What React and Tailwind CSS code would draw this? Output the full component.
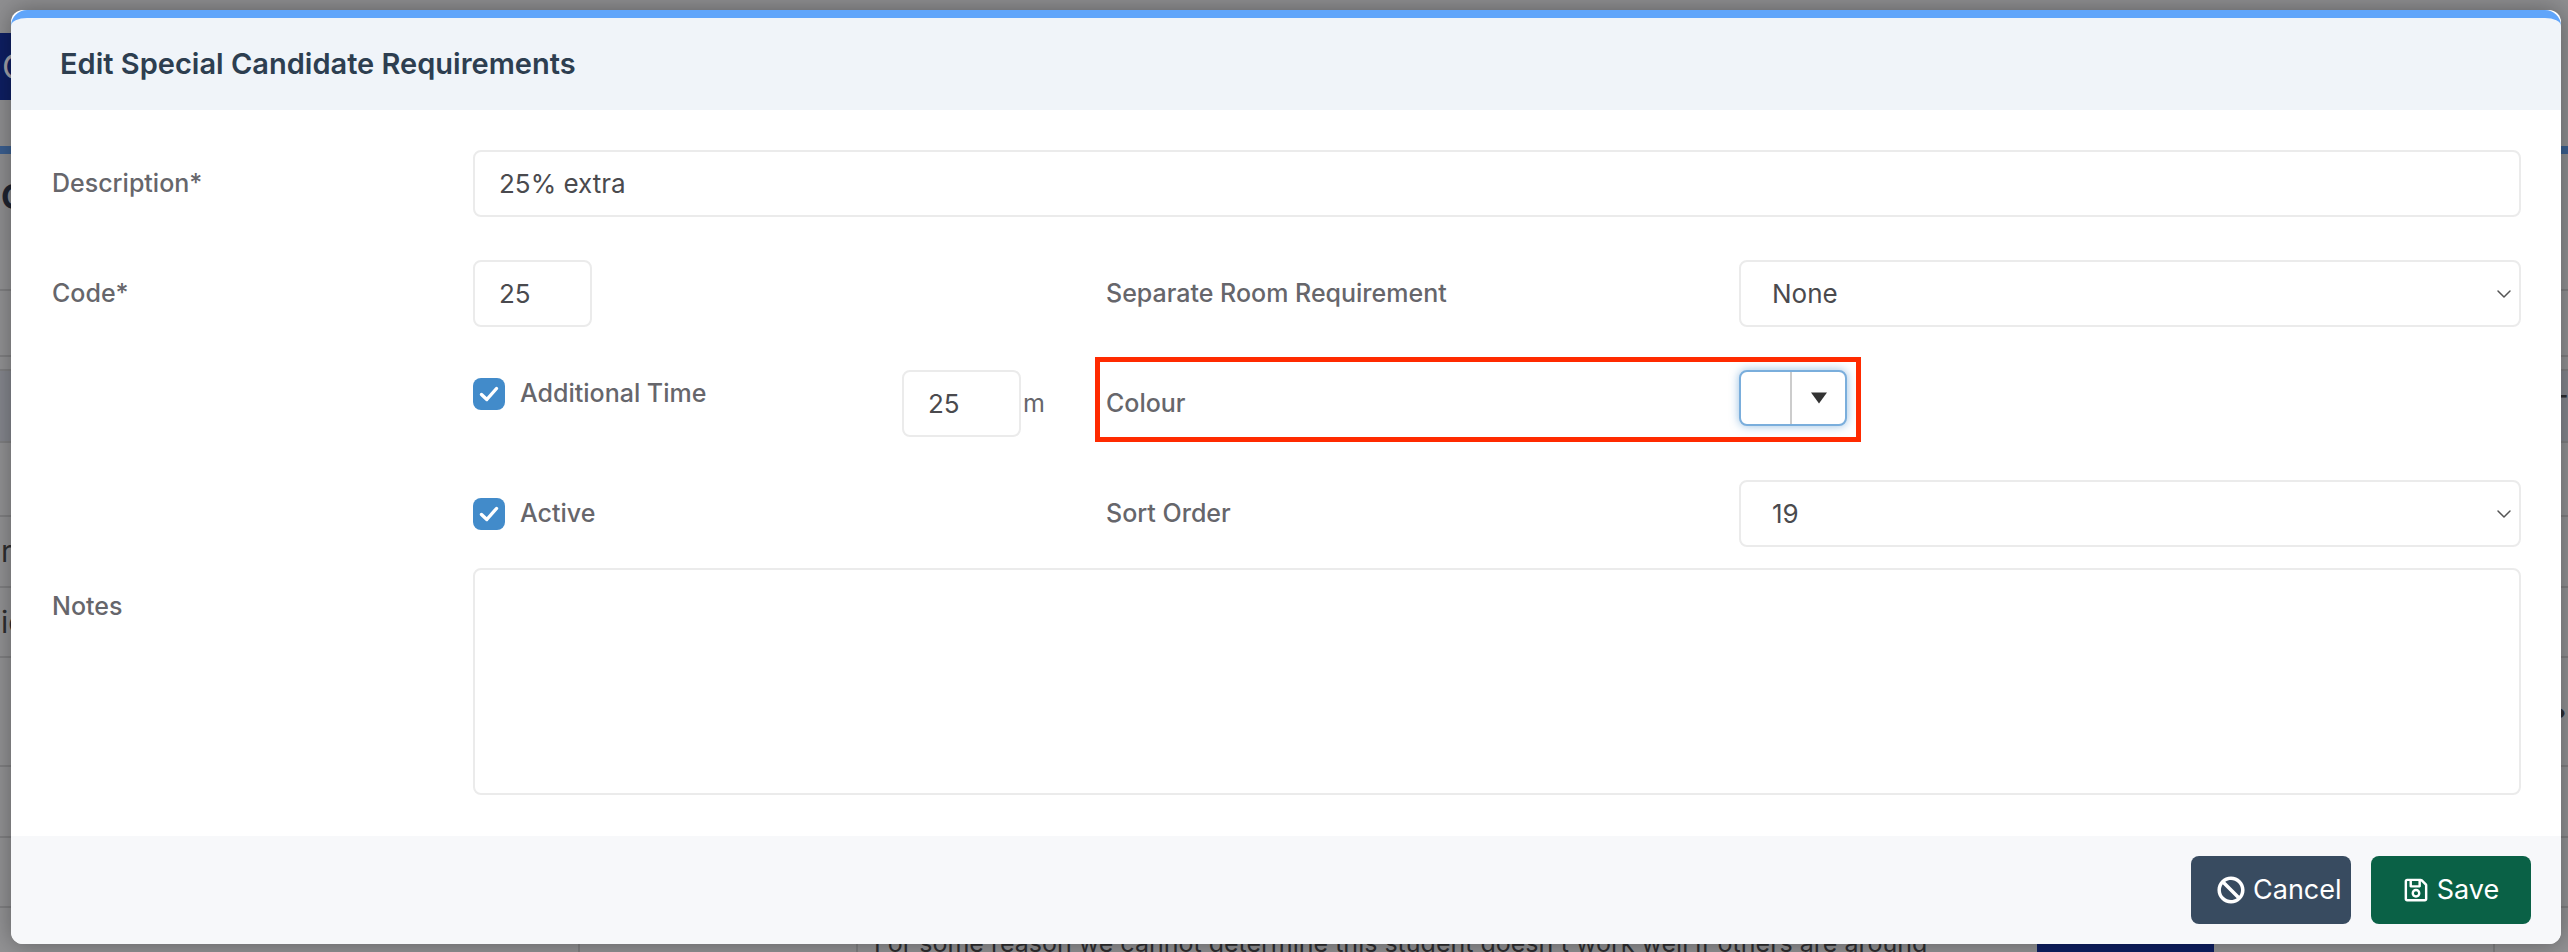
import { ChevronDown } from "lucide-react";
import { FaBan, FaRegSave } from "react-icons/fa";

// what is left of the page behind the dialog, top to bottom
const rows = [
  { h: 41, left: "", right: "" },
  { h: 66 },
  { h: 14 },
  { h: 72, tint: true, right: "T" },
  { h: 74 },
  { h: 71, left: "r" },
  { h: 70, left: "ic" },
  { h: 109, right: "•" },
  { h: 71 },
  { h: 70 },
];

const inputClass =
  "h-[67px] rounded-lg border-2 border-[#ebebeb] bg-white text-[26px] text-[#4a4a4e] outline-none";
const labelClass = "text-[25px] font-medium text-[#66666b]";

const Check = () => (
  <span className="flex h-8 w-8 shrink-0 items-center justify-center rounded-lg bg-[#428bca]">
    <svg width="22" height="22" viewBox="0 0 22 22" fill="none">
      <path d="M3.5 11.5 L8.8 16.5 L18.5 5.5" stroke="white" strokeWidth="3.4" strokeLinecap="round" strokeLinejoin="round" />
    </svg>
  </span>
);

const Select = ({ value }) => (
  <div className="relative w-[782px]">
    <select
      defaultValue={value}
      className={`${inputClass} w-full appearance-none pl-[31px]`}
    >
      <option>{value}</option>
    </select>
    <ChevronDown
      size={24}
      strokeWidth={1.5}
      className="pointer-events-none absolute right-[5px] top-[22px] text-[#555]"
    />
  </div>
);

const Backdrop = () => (
  <div className="flex h-[952px] w-[2568px] flex-col overflow-hidden bg-[#8f8f91]">
    <div className="mt-[33px] flex h-[67px] w-[1500px] items-center bg-[#0e1f63] pl-[2px] text-[34px] text-[#a3a3ab]">
      C
    </div>
    <div className="mt-[46px] h-2 w-full bg-[#3b5f90]" />
    <div className="flex h-[96px] items-center pl-[1px] pb-[12px] text-[34px] font-bold text-[#1f2430]">C</div>
    {rows.map((row, i) => (
      <div
        key={i}
        style={{ height: row.h }}
        className={`flex shrink-0 items-center justify-between overflow-hidden border-b-2 border-[#808082] text-[30px] text-[#2e2e30] ${
          row.tint ? "bg-[#85878e]" : "bg-[#929294]"
        }`}
      >
        <span className="pl-[1px]">{row.left}</span>
        <span className="pr-[-2px]">{row.right}</span>
      </div>
    ))}
    <div className="flex h-[44px] shrink-0 bg-[#929294]">
      <div className="w-[578px]" />
      <div className="w-[278px] border-l-2 border-[#808082]" />
      <div className="w-[1181px] whitespace-nowrap border-l-2 border-[#808082] pl-[16px] pt-5 text-[25px] leading-[30px] text-[#2e2e30]">
        For some reason we cannot determine this student doesn't work well if others are around
      </div>
      <div className="mt-[36px] w-[177px] bg-[#0e1f63]" />
      <div className="ml-[279px] border-l-2 border-[#808082]" />
    </div>
  </div>
);

const App = () => {
  return (
    <div className="relative h-[952px] w-[2568px] overflow-hidden font-['Inter',sans-serif]">
      <Backdrop />

      <div className="absolute left-[11px] top-[10px] flex h-[934px] w-[2550px] flex-col rounded-xl bg-white shadow-[0_0_24px_rgba(0,0,0,0.35)]">
        <div className="flex h-[100px] shrink-0 items-center rounded-t-[16px] border-t-8 border-[#60a5fa] bg-[#f0f4f9] pl-[49px]">
          <h1 className="text-[29px] font-semibold text-[#2d3e50]">Edit Special Candidate Requirements</h1>
        </div>

        <div className="flex flex-1 flex-col gap-[43px] pl-[41px] pr-[40px] pt-[40px]">
          <div className="flex items-center">
            <label className={`${labelClass} w-[421px] shrink-0`}>Description*</label>
            <input defaultValue="25% extra" className={`${inputClass} flex-1 pl-[24px]`} />
          </div>

          <div className="flex items-center">
            <label className={`${labelClass} w-[421px] shrink-0`}>Code*</label>
            <div className="w-[633px] shrink-0">
              <input defaultValue="25" className={`${inputClass} w-[119px] pl-[24px]`} />
            </div>
            <label className={`${labelClass} w-[633px] shrink-0`}>Separate Room Requirement</label>
            <Select value="None" />
          </div>

          <div className="flex h-[67px] items-center">
            <div className="ml-[421px] flex w-[429px] shrink-0 items-center gap-[15px] self-start pt-[5px]">
              <Check />
              <span className={labelClass}>Additional Time</span>
            </div>
            <input defaultValue="25" className={`${inputClass} w-[119px] pl-[24px]`} />
            <span className={`${labelClass} ml-[2px] w-[83px] shrink-0 font-normal`}>m</span>
            <label className={`${labelClass} w-[633px] shrink-0`}>Colour</label>
            <div className="mb-[11px] flex h-14 w-[108px] items-stretch rounded-lg border-2 border-[#7aaedc] bg-white shadow-[0_0_10px_rgba(66,139,202,0.55)]">
              <div className="w-[51px] border-r-2 border-[#cccccc]" />
              <div className="flex flex-1 items-center justify-center">
                <svg width="18" height="12" viewBox="0 0 18 12">
                  <path d="M1 0.5 H17 L9 11.5 Z" fill="#333333" />
                </svg>
              </div>
            </div>
          </div>

          <div className="flex items-center">
            <div className="ml-[421px] flex w-[633px] shrink-0 items-center gap-[15px]">
              <Check />
              <span className={labelClass}>Active</span>
            </div>
            <label className={`${labelClass} w-[633px] shrink-0`}>Sort Order</label>
            <Select value="19" />
          </div>

          <div className="-mt-[22px] flex items-start">
            <label className={`${labelClass} w-[421px] shrink-0 pt-[20px]`}>Notes</label>
            <textarea className="h-[227px] flex-1 resize-none rounded-lg border-2 border-[#ebebeb] bg-white outline-none" />
          </div>
        </div>

        <div className="flex h-[108px] shrink-0 items-center justify-end gap-5 rounded-b-xl bg-[#f7f8fa] pr-[30px]">
          <button className="flex h-[68px] w-[160px] items-center gap-2 rounded-lg bg-[#384b60] pl-[26px] text-[27px] text-white">
            <FaBan size={28} />
            Cancel
          </button>
          <button className="flex h-[68px] w-[160px] items-center justify-center gap-2 rounded-lg bg-[#0a6146] text-[27px] text-white">
            <FaRegSave size={26} />
            Save
          </button>
        </div>

        {/* annotation drawn over the colour row */}
        <div className="pointer-events-none absolute left-[1084px] top-[347px] h-[85px] w-[766px] border-[5px] border-[#ff2a00]" />
      </div>
    </div>
  );
};

export default App;
